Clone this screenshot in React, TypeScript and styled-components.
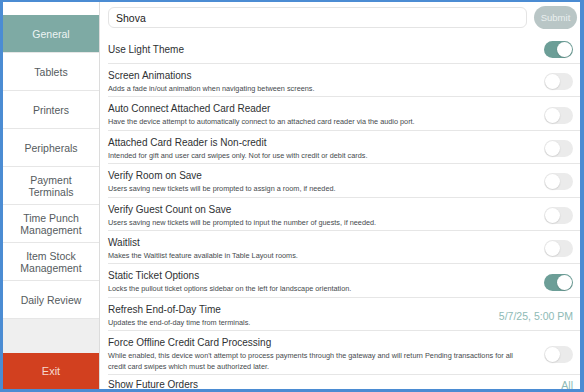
import styled, { createGlobalStyle } from "styled-components";

const Global = createGlobalStyle`
  html, body {
    margin: 0;
    padding: 0;
    background: #ffffff;
  }
  * {
    box-sizing: border-box;
  }
`;

const Frame = styled.div`
  width: 584px;
  height: 392px;
  border: 3px solid #4b8cd3;
  border-top-width: 2px;
  border-right-width: 4px;
  display: flex;
  overflow: hidden;
  font-family: "Liberation Sans", Arial, sans-serif;
  background: #ffffff;
`;

const Sidebar = styled.div`
  width: 97px;
  flex-shrink: 0;
  border-right: 1px solid #dcdcdc;
  display: flex;
  flex-direction: column;
  padding-top: 13px;
`;

const NavItem = styled.div<{ active?: boolean }>`
  height: 38px;
  border-bottom: 1px solid #e6e6e6;
  display: flex;
  align-items: center;
  justify-content: center;
  text-align: center;
  font-size: 10.5px;
  line-height: 12px;
  color: ${(p) => (p.active ? "#eef5f4" : "#555b5e")};
  background: ${(p) => (p.active ? "#7eaaa4" : "#ffffff")};
`;

const Filler = styled.div`
  flex: 1;
  background: #efefef;
`;

const ExitButton = styled.div`
  height: 36px;
  background: #d2401f;
  color: #f6d9cf;
  font-size: 11px;
  display: flex;
  align-items: center;
  justify-content: center;
`;

const Main = styled.div`
  flex: 1;
  min-width: 0;
  padding-left: 8px;
  display: flex;
  flex-direction: column;
`;

const Header = styled.div`
  display: flex;
  align-items: center;
  gap: 7px;
  padding: 4px 3px 6px 0;
  flex-shrink: 0;
`;

const NameInput = styled.div`
  flex: 1;
  height: 21px;
  border: 1px solid #e4e4e4;
  border-radius: 6px;
  padding-left: 7px;
  display: flex;
  align-items: center;
  font-size: 10.5px;
  color: #222;
`;

const Submit = styled.div`
  width: 43px;
  height: 23px;
  border-radius: 12px;
  background: #b9c6c6;
  color: #e9efef;
  font-size: 9.5px;
  display: flex;
  align-items: center;
  justify-content: center;
`;

const Row = styled.div<{ plain?: boolean; last?: boolean }>`
  flex-shrink: 0;
  display: flex;
  align-items: center;
  justify-content: space-between;
  padding: ${(p) =>
    p.last ? "3px 7px 3px 0" : p.plain ? "6px 7px 5px 0" : "5px 7px 2px 0"};
  border-bottom: ${(p) => (p.last ? "none" : "1px solid #e6e6e6")};
`;

const Text = styled.div`
  display: flex;
  flex-direction: column;
  padding-right: 16px;
`;

const Title = styled.div`
  font-size: 10px;
  line-height: 13px;
  color: #2e3133;
`;

const Desc = styled.div`
  font-size: 7.3px;
  line-height: 10.4px;
  margin-top: 2px;
  color: #454a4d;
`;

const Toggle = styled.div<{ on?: boolean }>`
  flex-shrink: 0;
  width: 29px;
  height: 17px;
  border-radius: 9px;
  background: ${(p) => (p.on ? "#6c9e97" : "#ebebeb")};
  position: relative;
  &::after {
    content: "";
    position: absolute;
    top: 1px;
    left: ${(p) => (p.on ? "13px" : "1px")};
    width: 15px;
    height: 15px;
    border-radius: 50%;
    background: #ffffff;
    box-shadow: 0 0.5px 1.5px rgba(0, 0, 0, 0.18);
  }
`;

const Value = styled.div`
  flex-shrink: 0;
  font-size: 10.5px;
  color: #8ebab5;
`;

type Setting = {
  title: string;
  desc?: string;
  on?: boolean;
  value?: string;
};

const nav = [
  "General",
  "Tablets",
  "Printers",
  "Peripherals",
  "Payment Terminals",
  "Time Punch Management",
  "Item Stock Management",
  "Daily Review",
];

const twoLine = ["Payment Terminals", "Time Punch Management", "Item Stock Management"];

const settings: Setting[] = [
  { title: "Use Light Theme", on: true },
  {
    title: "Screen Animations",
    desc: "Adds a fade in/out animation when navigating between screens.",
    on: false,
  },
  {
    title: "Auto Connect Attached Card Reader",
    desc: "Have the device attempt to automatically connect to an attached card reader via the audio port.",
    on: false,
  },
  {
    title: "Attached Card Reader is Non-credit",
    desc: "Intended for gift and user card swipes only. Not for use with credit or debit cards.",
    on: false,
  },
  {
    title: "Verify Room on Save",
    desc: "Users saving new tickets will be prompted to assign a room, if needed.",
    on: false,
  },
  {
    title: "Verify Guest Count on Save",
    desc: "Users saving new tickets will be prompted to input the number of guests, if needed.",
    on: false,
  },
  {
    title: "Waitlist",
    desc: "Makes the Waitlist feature available in Table Layout rooms.",
    on: false,
  },
  {
    title: "Static Ticket Options",
    desc: "Locks the pullout ticket options sidebar on the left for landscape orientation.",
    on: true,
  },
  {
    title: "Refresh End-of-Day Time",
    desc: "Updates the end-of-day time from terminals.",
    value: "5/7/25, 5:00 PM",
  },
  {
    title: "Force Offline Credit Card Processing",
    desc: "While enabled, this device won't attempt to process payments through the gateway and will return Pending transactions for all credit card swipes which must be authorized later.",
    on: false,
  },
  { title: "Show Future Orders", value: "All" },
];

export default function App() {
  return (
    <>
      <Global />
      <Frame>
        <Sidebar>
          {nav.map((n) => (
            <NavItem key={n} active={n === "General"}>
              {twoLine.includes(n) ? (
                <span>
                  {n.split(" ").slice(0, -1).join(" ")}
                  <br />
                  {n.split(" ").slice(-1)}
                </span>
              ) : (
                n
              )}
            </NavItem>
          ))}
          <Filler />
          <ExitButton>Exit</ExitButton>
        </Sidebar>
        <Main>
          <Header>
            <NameInput>Shova</NameInput>
            <Submit>Submit</Submit>
          </Header>
          {settings.map((s, i) => (
            <Row key={s.title} plain={!s.desc} last={i === settings.length - 1}>
              <Text>
                <Title>{s.title}</Title>
                {s.desc && <Desc>{s.desc}</Desc>}
              </Text>
              {s.value ? <Value>{s.value}</Value> : <Toggle on={s.on} />}
            </Row>
          ))}
        </Main>
      </Frame>
    </>
  );
}
